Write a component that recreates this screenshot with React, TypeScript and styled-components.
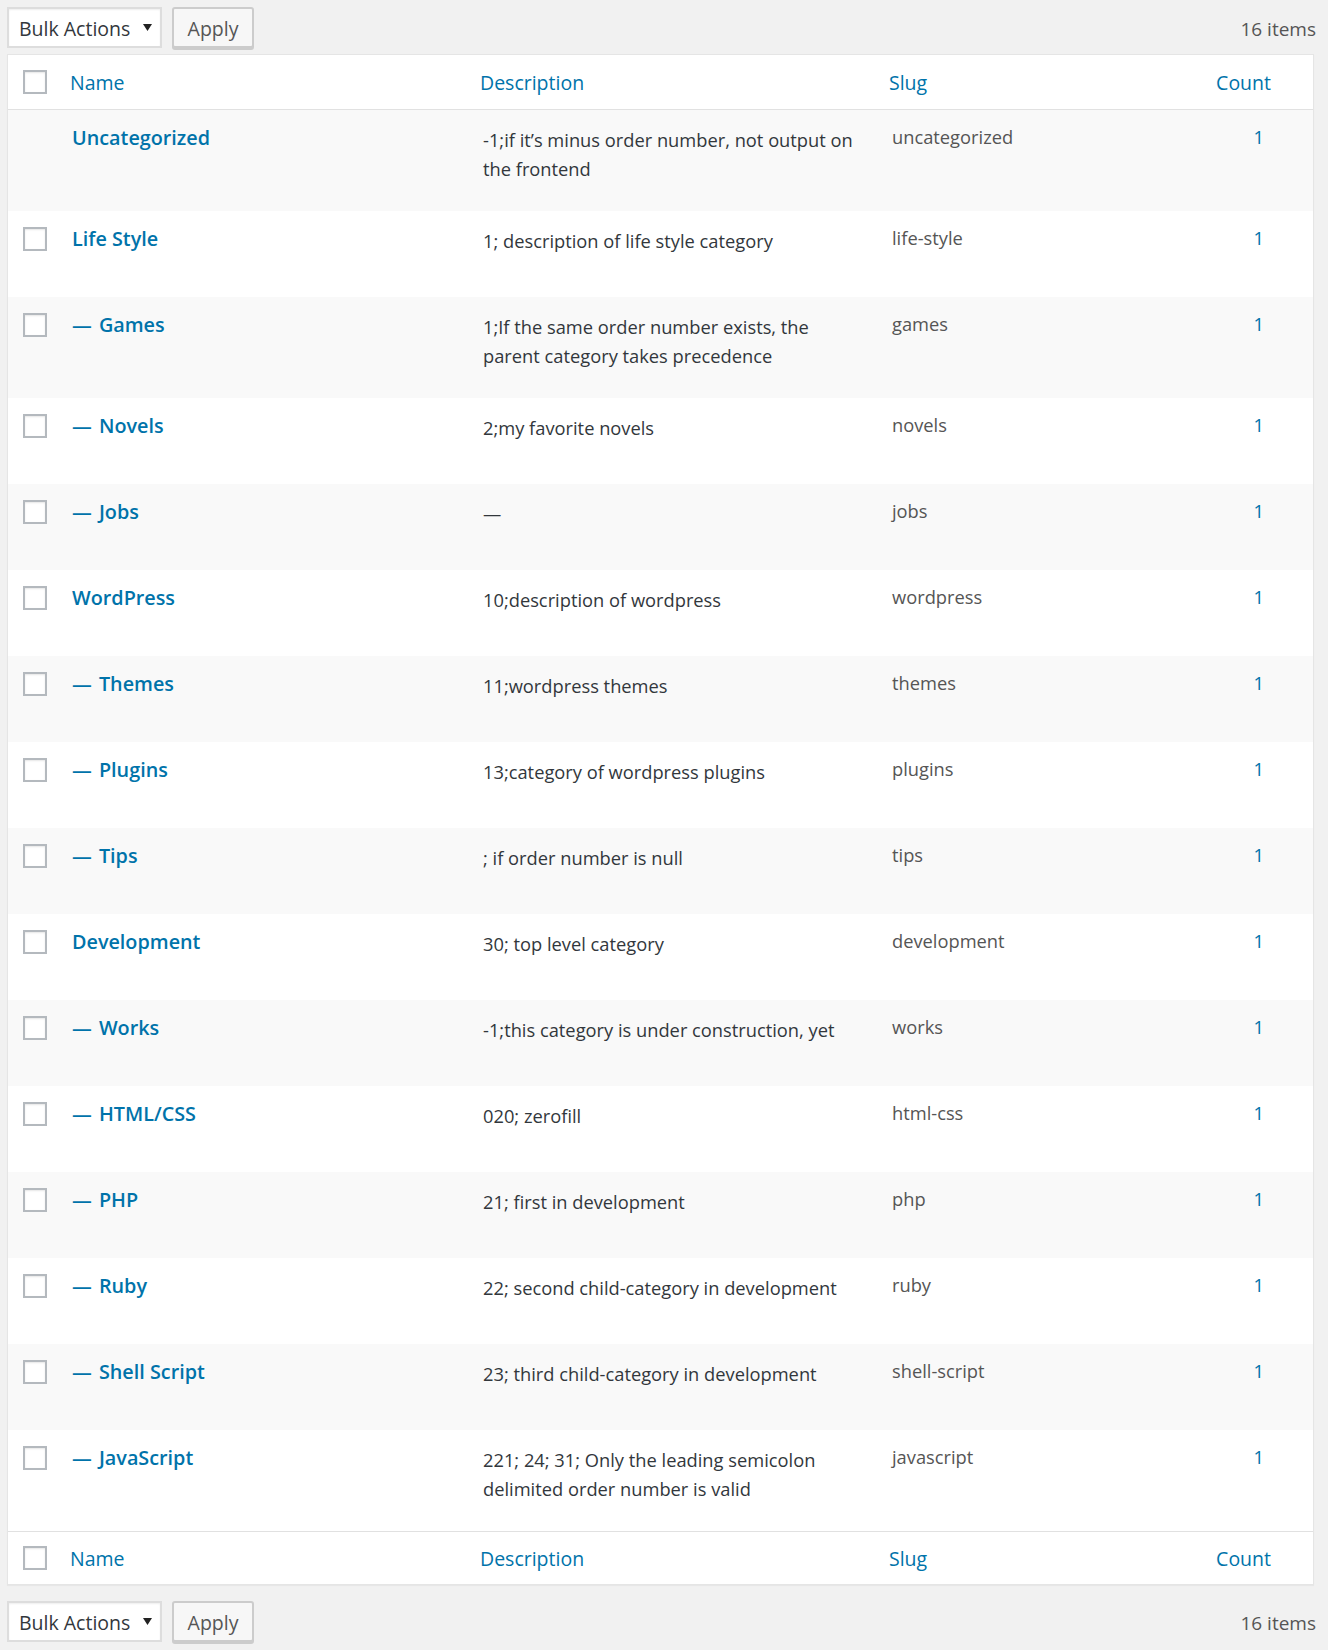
import React from "react";
import styled, { createGlobalStyle } from "styled-components";

const GlobalStyle = createGlobalStyle`
  html, body {
    margin: 0;
    padding: 0;
    background: #f1f1f1;
  }
  body {
    font-family: "Open Sans", "Noto Sans", sans-serif;
    color: #32373c;
  }
  * { box-sizing: border-box; }
`;

const COLS = "52px 410px 409px 301px 1fr";

const Page = styled.div`
  padding: 7px 14px 9px 7px;
`;

const Toolbar = styled.div<{ $pos: "top" | "bottom" }>`
  display: flex;
  align-items: flex-start;
  gap: 10px;
  height: 43px;
  margin: ${(p) => (p.$pos === "top" ? "0 0 4px" : "16px 0 0")};
`;

const Select = styled.div`
  width: 155px;
  height: 41px;
  background: #fff;
  border: 2px solid #dddddd;
  box-shadow: inset 0 1px 2px rgba(0, 0, 0, 0.07);
  display: flex;
  align-items: center;
  justify-content: space-between;
  padding: 1px 8px 0 10px;
  font-size: 19.5px;
  color: #32373c;
`;

const Arrow = styled.svg`
  width: 9px;
  height: 9px;
  margin-top: -2px;
`;

const ApplyButton = styled.button`
  width: 82px;
  height: 41px;
  background: #f7f7f7;
  border: 2px solid #cccccc;
  border-radius: 3px;
  box-shadow: 0 2px 0 #cccccc;
  font-family: inherit;
  font-size: 19.5px;
  color: #555;
  padding: 1px 0 0;
`;

const ItemCount = styled.div`
  margin-left: auto;
  margin-right: -2px;
  line-height: 45px;
  font-size: 19px;
  color: #555;
`;

const Table = styled.div`
  background: #fff;
  border: 1px solid #e5e5e5;
  box-shadow: 0 1px 1px rgba(0, 0, 0, 0.04);
`;

const HeadRow = styled.div<{ $foot?: boolean }>`
  display: grid;
  grid-template-columns: ${COLS};
  align-items: center;
  height: ${(p) => (p.$foot ? "53px" : "55px")};
  ${(p) =>
    p.$foot
      ? "border-top: 1px solid #e1e1e1;"
      : "border-bottom: 1px solid #e1e1e1;"}
`;

const HeadCheck = styled.div`
  padding-left: 15px;
  display: flex;
  align-items: center;
`;

const HeadCell = styled.div<{ $align?: "left" | "right"; $pad?: number }>`
  font-size: 19.5px;
  color: #0073aa;
  text-align: ${(p) => p.$align ?? "left"};
  padding-left: 10px;
  padding-right: ${(p) => p.$pad ?? 10}px;
`;

const Checkbox = styled.span`
  display: block;
  width: 24px;
  height: 24px;
  border: 2px solid #b4b9be;
  background: #fff;
  box-shadow: inset 0 1px 2px rgba(0, 0, 0, 0.1);
`;

const Row = styled.div<{ $striped: boolean }>`
  display: grid;
  grid-template-columns: ${COLS};
  min-height: 86px;
  background: ${(p) => (p.$striped ? "#f9f9f9" : "#fff")};
`;

const CheckCell = styled.div`
  padding: 16px 0 0 15px;
`;

const NameCell = styled.div`
  padding: 14px 10px 0 12px;
  font-size: 19.8px;
  font-weight: 600;
  line-height: 28px;
  color: #0073aa;
`;

const Dash = styled.span`
  margin-right: 2px;
`;

const DescCell = styled.div`
  padding: 15px 15px 28px 13px;
  font-size: 18.3px;
  line-height: 29px;
  color: #32373c;
`;

const SlugCell = styled.div`
  padding: 12px 10px 0 13px;
  font-size: 18.3px;
  line-height: 29px;
  color: #555;
`;

const CountCell = styled.div`
  padding: 12px 49px 0 0;
  font-size: 18.3px;
  line-height: 29px;
  text-align: right;
  color: #0073aa;
`;

type Term = {
  name: string;
  child?: boolean;
  desc: string;
  slug: string;
  count: number;
  noCheck?: boolean;
};

const terms: Term[] = [
  { name: "Uncategorized", desc: "-1;if it’s minus order number, not output on the frontend", slug: "uncategorized", count: 1, noCheck: true },
  { name: "Life Style", desc: "1; description of life style category", slug: "life-style", count: 1 },
  { name: "Games", child: true, desc: "1;If the same order number exists, the parent category takes precedence", slug: "games", count: 1 },
  { name: "Novels", child: true, desc: "2;my favorite novels", slug: "novels", count: 1 },
  { name: "Jobs", child: true, desc: "—", slug: "jobs", count: 1 },
  { name: "WordPress", desc: "10;description of wordpress", slug: "wordpress", count: 1 },
  { name: "Themes", child: true, desc: "11;wordpress themes", slug: "themes", count: 1 },
  { name: "Plugins", child: true, desc: "13;category of wordpress plugins", slug: "plugins", count: 1 },
  { name: "Tips", child: true, desc: "; if order number is null", slug: "tips", count: 1 },
  { name: "Development", desc: "30; top level category", slug: "development", count: 1 },
  { name: "Works", child: true, desc: "-1;this category is under construction, yet", slug: "works", count: 1 },
  { name: "HTML/CSS", child: true, desc: "020; zerofill", slug: "html-css", count: 1 },
  { name: "PHP", child: true, desc: "21; first in development", slug: "php", count: 1 },
  { name: "Ruby", child: true, desc: "22; second child-category in development", slug: "ruby", count: 1 },
  { name: "Shell Script", child: true, desc: "23; third child-category in development", slug: "shell-script", count: 1 },
  { name: "JavaScript", child: true, desc: "221; 24; 31; Only the leading semicolon delimited order number is valid", slug: "javascript", count: 1 },
];

function BulkBar({ pos }: { pos: "top" | "bottom" }) {
  return (
    <Toolbar $pos={pos}>
      <Select>
        <span>Bulk Actions</span>
        <Arrow viewBox="0 0 10 10">
          <polygon points="0,1 10,1 5,9" fill="#222" />
        </Arrow>
      </Select>
      <ApplyButton>Apply</ApplyButton>
      <ItemCount>16 items</ItemCount>
    </Toolbar>
  );
}

function Header({ foot }: { foot?: boolean }) {
  return (
    <HeadRow $foot={foot}>
      <HeadCheck>
        <Checkbox />
      </HeadCheck>
      <HeadCell>Name</HeadCell>
      <HeadCell>Description</HeadCell>
      <HeadCell>Slug</HeadCell>
      <HeadCell $align="right" $pad={42}>
        Count
      </HeadCell>
    </HeadRow>
  );
}

export default function App() {
  return (
    <>
      <GlobalStyle />
      <Page>
        <BulkBar pos="top" />
        <Table>
          <Header />
          {terms.map((t, i) => (
            <Row key={t.slug} $striped={i % 2 === 0}>
              <CheckCell>{!t.noCheck && <Checkbox />}</CheckCell>
              <NameCell>
                {t.child && <Dash>— </Dash>}
                {t.name}
              </NameCell>
              <DescCell>{t.desc}</DescCell>
              <SlugCell>{t.slug}</SlugCell>
              <CountCell>{t.count}</CountCell>
            </Row>
          ))}
          <Header foot />
        </Table>
        <BulkBar pos="bottom" />
      </Page>
    </>
  );
}
